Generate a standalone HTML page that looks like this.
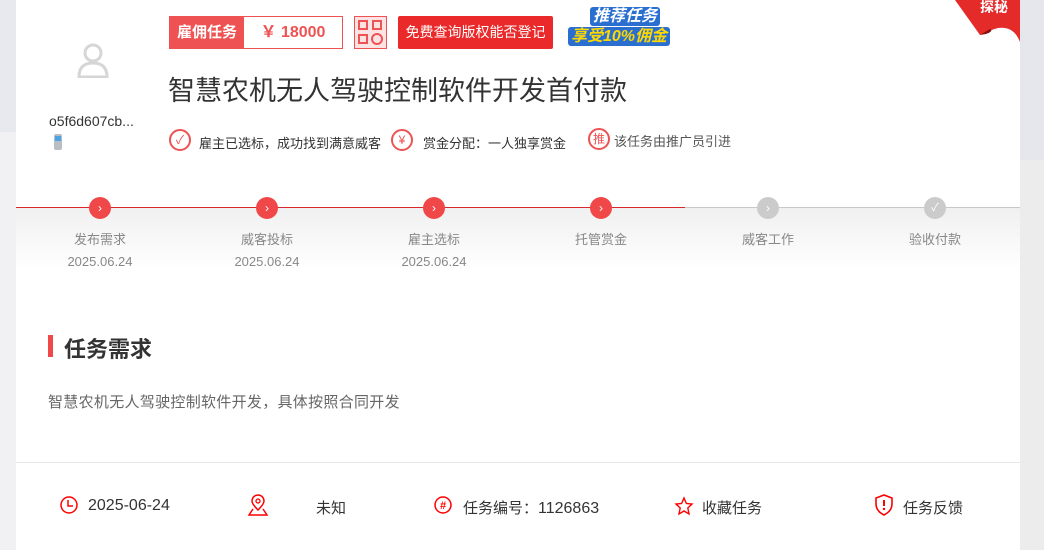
<!DOCTYPE html>
<html><head><meta charset="utf-8"><style>
*{margin:0;padding:0;box-sizing:border-box}
body{width:1044px;height:550px;overflow:hidden;background:#ececec;font-family:"Liberation Sans","Noto Sans CJK SC",sans-serif;position:relative}
.a{position:absolute}
</style></head><body>
<div class="a" style="left:0;top:0;width:16px;height:132px;background:#e8e9ee"></div>
<div class="a" style="left:0;top:132px;width:16px;height:418px;background:#f1f1f3"></div>
<div class="a" style="left:1020px;top:0;width:24px;height:160px;background:#e6e7ec"></div>
<div class="a" style="left:16px;top:0;width:1004px;height:550px;background:#fff"></div>
<!-- corner ribbon -->
<svg class="a" style="left:950px;top:0" width="70" height="45" viewBox="0 0 70 45"><path d="M5 0 L70 0 L70 42 Q64 26 48 28 Q40 30 30 35 Z" fill="#e52a2a"/><path d="M30 35 L40 29 Q44 31 36 34Z" fill="#8a1010"/><text x="30" y="12" fill="#fff" font-size="14" font-weight="bold" font-family="Noto Sans CJK SC">探秘</text></svg>
<!-- avatar -->
<svg class="a" style="left:76px;top:42px" width="34" height="36" viewBox="0 0 34 36"><circle cx="17" cy="11" r="8" fill="none" stroke="#d6d6d6" stroke-width="3"/><path d="M3 35 Q3 21 17 21 Q31 21 31 35 Z" fill="none" stroke="#d6d6d6" stroke-width="3"/></svg>
<div class="a" style="left:49px;top:113px;font-size:14px;color:#333">o5f6d607cb...</div>
<div class="a" style="left:54px;top:134px;width:8px;height:16px;background:#b8bec4;border-radius:2px"><div style="margin:2px 1px;height:5px;background:#4aa3e8"></div></div>
<!-- top badges -->
<div class="a" style="left:169px;top:16px;width:174px;height:33px;border:1px solid #ee5253;display:flex">
<div style="width:74px;background:#ee5253;color:#fff;font-size:15px;font-weight:bold;line-height:31px;text-align:center">雇佣任务</div>
<div style="flex:1;color:#ee5253;font-size:16px;font-weight:bold;line-height:31px;text-align:center">￥ 18000</div></div>
<div class="a" style="left:354px;top:16px;width:33px;height:33px;border:1px solid #ee5253;background:#fbe3e3"><svg width="31" height="31" viewBox="0 0 31 31"><g fill="none" stroke="#ee5253" stroke-width="2"><rect x="4" y="4" width="8" height="8"/><rect x="18" y="4" width="8" height="8"/><rect x="4" y="18" width="8" height="8"/><circle cx="22" cy="22" r="5"/></g></svg></div>
<div class="a" style="left:398px;top:16px;width:155px;height:33px;background:#ea2a2a;color:#fff;font-size:14px;line-height:33px;text-align:center;border-radius:2px">免费查询版权能否登记</div>
<div class="a" style="left:568px;top:6px;width:126px;height:42px;">
<div style="position:absolute;left:22px;top:1px;font-size:16px;font-weight:bold;font-style:italic;color:#fff;background:#2a6fd0;padding:0 3px;line-height:19px;border-radius:3px">推荐任务</div>
<div style="position:absolute;left:0;top:21px;font-size:16px;font-weight:bold;font-style:italic;color:#ffd800;background:#2a6fd0;padding:0 3px;line-height:19px;border-radius:3px">享受10%佣金</div></div>
<div class="a" style="left:168px;top:69px;font-size:27px;color:#333">智慧农机无人驾驶控制软件开发首付款</div>
<!-- info row -->
<div class="a" style="left:169px;top:129px;width:22px;height:22px;border:2px solid #ee5253;border-radius:50%;color:#ee5253;font-size:12px;text-align:center;line-height:18px">✓</div>
<div class="a" style="left:199px;top:133px;font-size:13px;color:#333">雇主已选标，成功找到满意威客</div>
<div class="a" style="left:391px;top:129px;width:22px;height:22px;border:2px solid #ee5253;border-radius:50%;color:#ee5253;font-size:12px;text-align:center;line-height:18px">¥</div>
<div class="a" style="left:423px;top:133px;font-size:13px;color:#333">赏金分配：一人独享赏金</div>
<div class="a" style="left:588px;top:128px;width:22px;height:22px;border:2px solid #ee5253;border-radius:50%;color:#ee5253;font-size:12px;text-align:center;line-height:18px">推</div>
<div class="a" style="left:614px;top:131px;font-size:13px;color:#555">该任务由推广员引进</div>
<!-- steps -->
<div class="a" style="left:16px;top:208px;width:1004px;height:62px;background:linear-gradient(#f0f0f0,#fff)"></div>
<div class="a" style="left:16px;top:207px;width:669px;height:1px;background:#d8282c"></div>
<div class="a" style="left:685px;top:207px;width:335px;height:1px;background:#c8c8c8"></div>
<div class="a" style="left:0;top:197px;width:1044px;height:80px">
<div class="a" style="left:89px;top:0;width:22px;height:22px;border-radius:50%;background:#f04848;color:#fff;text-align:center;line-height:22px;font-size:12px">›</div>
<div class="a" style="left:256px;top:0;width:22px;height:22px;border-radius:50%;background:#f04848;color:#fff;text-align:center;line-height:22px;font-size:12px">›</div>
<div class="a" style="left:423px;top:0;width:22px;height:22px;border-radius:50%;background:#f04848;color:#fff;text-align:center;line-height:22px;font-size:12px">›</div>
<div class="a" style="left:590px;top:0;width:22px;height:22px;border-radius:50%;background:#f04848;color:#fff;text-align:center;line-height:22px;font-size:12px">›</div>
<div class="a" style="left:757px;top:0;width:22px;height:22px;border-radius:50%;background:#cbcbcb;color:#fff;text-align:center;line-height:22px;font-size:12px">›</div>
<div class="a" style="left:924px;top:0;width:22px;height:22px;border-radius:50%;background:#cbcbcb;color:#fff;text-align:center;line-height:22px;font-size:11px">✓</div>
</div>
<div class="a" style="left:0;top:229px;width:1044px;font-size:13px;color:#888">
<div class="a" style="left:60px;width:80px;text-align:center">发布需求<br><span style="line-height:28px">2025.06.24</span></div>
<div class="a" style="left:227px;width:80px;text-align:center">威客投标<br><span style="line-height:28px">2025.06.24</span></div>
<div class="a" style="left:394px;width:80px;text-align:center">雇主选标<br><span style="line-height:28px">2025.06.24</span></div>
<div class="a" style="left:561px;width:80px;text-align:center">托管赏金</div>
<div class="a" style="left:728px;width:80px;text-align:center">威客工作</div>
<div class="a" style="left:895px;width:80px;text-align:center">验收付款</div>
</div>
<!-- requirements -->
<div class="a" style="left:48px;top:335px;width:5px;height:22px;background:#f04848"></div>
<div class="a" style="left:64px;top:332px;font-size:22px;font-weight:bold;color:#333">任务需求</div>
<div class="a" style="left:48px;top:391px;font-size:15px;color:#666;letter-spacing:0.3px">智慧农机无人驾驶控制软件开发，具体按照合同开发</div>
<div class="a" style="left:16px;top:462px;width:1004px;height:1px;background:#e8e8e8"></div>
<!-- bottom -->
<svg class="a" style="left:59px;top:495px" width="20" height="20" viewBox="0 0 20 20"><circle cx="10" cy="10" r="8" fill="none" stroke="#f00" stroke-width="1.5"/><path d="M9 5v6h5" fill="none" stroke="#f00" stroke-width="1.5"/></svg>
<div class="a" style="left:88px;top:497px;font-size:16px;color:#333">2025-06-24</div>
<svg class="a" style="left:247px;top:494px" width="22" height="22" viewBox="0 0 22 22"><path d="M11 16 Q5 10 5 7 A6 6 0 0 1 17 7 Q17 10 11 16Z" fill="none" stroke="#f00" stroke-width="1.5"/><circle cx="11" cy="7" r="2" fill="none" stroke="#f00" stroke-width="1.3"/><path d="M6 15 L2 21 H20 L16 15" fill="none" stroke="#f00" stroke-width="1.5"/></svg>
<div class="a" style="left:316px;top:497px;font-size:15px;color:#333">未知</div>
<svg class="a" style="left:433px;top:495px" width="20" height="20" viewBox="0 0 20 20"><circle cx="10" cy="10" r="8" fill="none" stroke="#f00" stroke-width="1.5"/><text x="10" y="14" fill="#f00" font-size="11" font-weight="bold" text-anchor="middle" font-family="Liberation Sans">#</text></svg>
<div class="a" style="left:463px;top:497px;font-size:15px;color:#333">任务编号：<span style="font-size:16px">1126863</span></div>
<svg class="a" style="left:674px;top:496px" width="20" height="20" viewBox="0 0 20 20"><path d="M10 2 L12.4 7.5 L18 8 L13.8 12 L15 18 L10 15 L5 18 L6.2 12 L2 8 L7.6 7.5Z" fill="none" stroke="#f00" stroke-width="1.4"/></svg>
<div class="a" style="left:702px;top:497px;font-size:15px;color:#333">收藏任务</div>
<svg class="a" style="left:874px;top:494px" width="20" height="22" viewBox="0 0 20 22"><path d="M10 1 L18 4 V10 Q18 17 10 21 Q2 17 2 10 V4Z" fill="none" stroke="#f00" stroke-width="1.6"/><path d="M10 6 V12" stroke="#f00" stroke-width="2"/><circle cx="10" cy="15" r="1.2" fill="#f00"/></svg>
<div class="a" style="left:903px;top:497px;font-size:15px;color:#333">任务反馈</div>
</body></html>
